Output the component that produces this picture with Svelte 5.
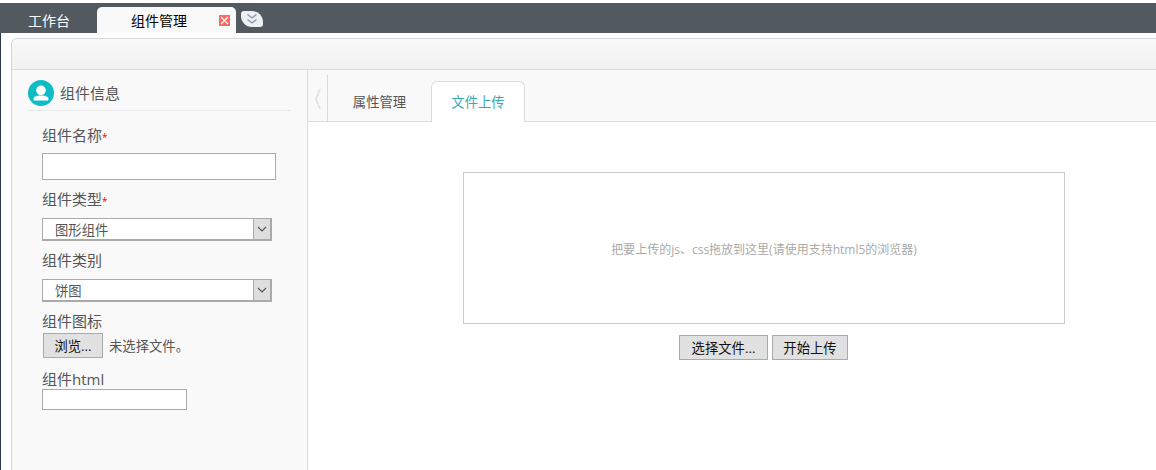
<script lang="ts">
	let tabs = ['属性管理', '文件上传'];
	let active = $state(1);
</script>

<div class="topbar">
	<span class="home">工作台</span>
	<div class="tab-on">
		<span class="tab-title">组件管理</span>
		<span class="close">
			<svg width="11" height="11" viewBox="0 0 11 11"><path d="M2 2l7 7M9 2l-7 7" stroke="#fff" stroke-width="1.2" /></svg>
		</span>
	</div>
	<div class="more">
		<svg width="12" height="12" viewBox="0 0 12 12" fill="none" stroke="#8a94a6" stroke-width="1.3"><path d="M1.500 1.500l4.500 3.500 4.500-3.500M1.500 6.500l4.500 3.500 4.500-3.500" /></svg>
	</div>
</div>

<div class="page">
	<div class="panel">
		<div class="toolbar"></div>
		<div class="split">
			<aside class="side">
				<div class="head">
					<span class="avatar">
						<svg width="26" height="26" viewBox="0 0 26 26" fill="#fff">
							<circle cx="13" cy="10.300" r="4.800" />
							<path d="M5.500 19.500c0-2.800 2.600-3.900 7.500-3.900s7.500 1.100 7.500 3.900c0 .6-.4 1-1 1h-13c-.6 0-1-.4-1-1z" />
						</svg>
					</span>
					<span>组件信息</span>
				</div>
				<form class="form">
					<div class="label l1">组件名称<i>*</i></div>
					<input class="text wide" type="text" />
					<div class="label l2">组件类型<i>*</i></div>
					<div class="select">
						<span class="value">图形组件</span>
						<span class="arrow"><svg width="10" height="6" viewBox="0 0 10 6" fill="none" stroke="#555" stroke-width="1.1"><path d="M1 1l4 4 4-4" /></svg></span>
					</div>
					<div class="label l3">组件类别</div>
					<div class="select">
						<span class="value">饼图</span>
						<span class="arrow"><svg width="10" height="6" viewBox="0 0 10 6" fill="none" stroke="#555" stroke-width="1.1"><path d="M1 1l4 4 4-4" /></svg></span>
					</div>
					<div class="label l4">组件图标</div>
					<div class="file">
						<button type="button" class="btn browse">浏览...</button>
						<span>未选择文件。</span>
					</div>
					<div class="label l5">组件html</div>
					<input class="text small" type="text" />
				</form>
			</aside>
			<main class="main">
				<div class="tabbar">
					<div class="fold">
						<svg width="8" height="22" viewBox="0 0 8 22" fill="none" stroke="#e4e4e4" stroke-width="2"><path d="M6 1L2 11l4 10" /></svg>
					</div>
					<div class="tabs">
						{#each tabs as t, i}
							<button type="button" class="tab" class:on={i === active} onclick={() => (active = i)}>{t}</button>
						{/each}
					</div>
				</div>
				<div class="upload">
					<div class="drop">把要上传的js、css拖放到这里(请使用支持html5的浏览器)</div>
					<div class="actions">
						<button type="button" class="btn pick">选择文件...</button>
						<button type="button" class="btn start">开始上传</button>
					</div>
				</div>
			</main>
		</div>
	</div>
</div>

<style>
	:global(body) {
		margin: 0;
		background: #fff;
		font-family: "Open Sans", "Noto Sans CJK SC", sans-serif;
		overflow: hidden;
	}
	.topbar {
		margin-top: 3px;
		height: 30px;
		background: #52595f;
		display: flex;
		align-items: flex-end;
		box-sizing: border-box;
	}
	.home {
		width: 97px;
		box-sizing: border-box;
		padding-left: 28px;
		height: 26px;
		line-height: 28px;
		font-size: 14px;
		color: #fff;
	}
	.tab-on {
		width: 139px;
		height: 26px;
		background: #f9f9f9;
		border-radius: 5px 5px 0 0;
		display: flex;
		align-items: center;
		position: relative;
		font-size: 14px;
		color: #000;
	}
	.tab-title {
		margin-left: 34px;
	}
	.close {
		position: absolute;
		left: 122px;
		top: 8px;
		width: 11px;
		height: 11px;
		background: #fb6a62;
		display: flex;
	}
	.more {
		width: 22px;
		height: 16px;
		margin: 0 0 6px 5px;
		background: #eef0f3;
		border-radius: 3px 11px 3px 11px;
		display: flex;
		justify-content: center;
		align-items: center;
	}
	.page {
		border-left: 1px solid #2b3a48;
		height: 437px;
		box-sizing: border-box;
		padding: 5px 0 0 10px;
		overflow: hidden;
	}
	.panel {
		height: 100%;
		border: 2px solid #dcdcdc;
		border-width: 1px 0 0 1px;
		border-top-color: #d6d6d6;
		border-left-color: #d6d6d6;
		border-top-left-radius: 6px;
		box-sizing: border-box;
		display: flex;
		flex-direction: column;
	}
	.toolbar {
		height: 30px;
		flex: none;
		border-radius: 6px 0 0 0;
		background: linear-gradient(#f9f9f9, #f1f1f1);
		border-bottom: 1px solid #dcdcdc;
	}
	.split {
		flex: 1;
		display: flex;
		min-height: 0;
	}
	.side {
		width: 296px;
		flex: none;
		box-sizing: border-box;
		background: #f9f9f9;
		border-right: 1px solid #dcdcdc;
		padding: 10px 16px 0;
	}
	.head {
		display: flex;
		gap: 6px;
		height: 31px;
		box-sizing: border-box;
		border-bottom: 1px solid #e8e8e8;
		font-size: 15px;
		color: #555;
		align-items: flex-start;
		line-height: 27px;
	}
	.avatar {
		width: 26px;
		height: 26px;
		border-radius: 50%;
		background: #0fbcc6;
		display: block;
		flex: none;
	}
	.avatar svg {
		display: block;
	}
	.form {
		padding: 15px 0 0 14px;
		margin: 0;
		font-size: 15px;
		color: #555;
	}
	.label {
		line-height: 18px;
		height: 20px;
	}
	.label i {
		color: #f00;
		font-style: normal;
		font-size: 10px;
	}
	.l1 {
		margin-bottom: 7px;
	}
	.l2 {
		margin-top: 10px;
		margin-bottom: 8px;
	}
	.l3 {
		margin-top: 10px;
		margin-bottom: 8px;
	}
	.l4 {
		margin-top: 10px;
		margin-bottom: 1px;
	}
	.l5 {
		margin-top: 12px;
		height: 19px;
	}
	.text {
		display: block;
		box-sizing: border-box;
		margin: 0;
		padding: 0 4px;
		background: #fff;
		border: 1px solid #aaa;
		outline: none;
		border-radius: 0;
	}
	.wide {
		width: 234px;
		height: 27px;
	}
	.small {
		width: 145px;
		height: 21px;
	}
	.select {
		width: 230px;
		height: 23px;
		box-sizing: border-box;
		border: 1px solid #aaa;
		border-width: 1px 2px 2px 1px;
		background: #fff;
		display: flex;
		font-size: 13.33px;
		line-height: 22px;
		color: #555;
	}
	.value {
		flex: 1;
		padding-left: 12px;
	}
	.arrow {
		width: 16px;
		background: #dedede;
		border-left: 1px solid #aaa;
		display: flex;
		align-items: center;
		justify-content: center;
	}
	.file {
		display: flex;
		align-items: center;
		gap: 6px;
		font-size: 13.33px;
		padding-left: 1px;
	}
	.btn {
		box-sizing: border-box;
		margin: 0;
		padding: 0;
		height: 25px;
		background: #e1e1e1;
		border: 1px solid #aaa;
		border-radius: 0;
		font: 13.33px "Open Sans", "Noto Sans CJK SC", sans-serif;
		color: #111;
	}
	.browse {
		width: 60px;
	}
	.main {
		flex: 1;
		min-width: 0;
		background: #fff;
	}
	.tabbar {
		height: 52px;
		box-sizing: border-box;
		background: #f9f9f9;
		border-bottom: 1px solid #dcdcdc;
		display: flex;
		padding-top: 5px;
	}
	.fold {
		width: 20px;
		flex: none;
		box-sizing: border-box;
		border-right: 1px solid #dcdcdc;
		display: flex;
		justify-content: center;
		padding-top: 13px;
		margin-bottom: -1px;
		height: 46px;
	}
	.tabs {
		display: flex;
		padding: 6px 0 0 6px;
		height: 47px;
		box-sizing: border-box;
	}
	.tab {
		box-sizing: border-box;
		margin: 0;
		height: 41px;
		width: 94px;
		padding: 0 0 2px;
		background: none;
		border: 1px solid transparent;
		border-bottom: 0;
		border-radius: 6px 6px 0 0;
		font: 13.33px "Open Sans", "Noto Sans CJK SC", sans-serif;
		color: #555;
	}
	.tab:first-child {
		width: 91px;
		margin-right: 6px;
	}
	.tab.on {
		background: #fff;
		border-color: #dcdcdc;
		color: #3aa7b5;
	}
	.upload {
		padding: 50px 0 0 155px;
		width: 602px;
	}
	.drop {
		width: 602px;
		height: 152px;
		box-sizing: border-box;
		border: 1px solid #ccc;
		padding-top: 2px;
		display: flex;
		align-items: center;
		justify-content: center;
		font-size: 12px;
		color: #aaa;
	}
	.actions {
		display: flex;
		gap: 4px;
		margin-top: 11px;
		padding-left: 216px;
	}
	.pick {
		width: 89px;
	}
	.start {
		width: 76px;
	}
</style>
